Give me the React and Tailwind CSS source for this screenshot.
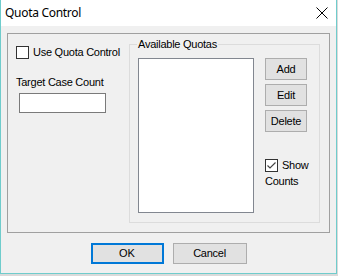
import React from "react";

const body = { fontFamily: '"Liberation Sans", Arial, sans-serif' };

function Box({ checked }) {
  return (
    <div className="w-[13px] h-[13px] border border-[#333333] bg-white flex items-center justify-center shrink-0">
      {checked && (
        <svg width="11" height="11" viewBox="0 0 11 11">
          <path d="M1.5 5.5 L4 8 L9.5 2.5" stroke="#444444" strokeWidth="1.2" fill="none" />
        </svg>
      )}
    </div>
  );
}

function Btn({ children }) {
  return (
    <div className="w-[42px] h-[22px] border border-[#adadad] bg-[#e1e1e1] flex items-center justify-center text-[11px] tracking-[-0.25px] text-black">
      {children}
    </div>
  );
}

export default function App() {
  return (
    <div className="w-[338px] h-[276px] bg-[#dadada]">
      <div className="w-[337px] h-[274px] border-l border-r border-b border-[#6fcccc] bg-[#f0f0f0] flex flex-col" style={body}>
        <div className="h-[26px] bg-white flex items-center justify-between pl-[4px] pr-[8px] shrink-0">
          <span className="text-[12px] tracking-[-0.3px] text-black" style={{ fontFamily: '"Noto Sans", "Open Sans", sans-serif' }}>Quota Control</span>
          <svg width="12" height="12" viewBox="0 0 12 12">
            <path d="M0.5 0.5 L11.5 11.5 M11.5 0.5 L0.5 11.5" stroke="#000" strokeWidth="1" />
          </svg>
        </div>
        <div className="pl-[6px] pt-[7px]">
          <div className="w-[323px] h-[200px] border border-[#a0a0a0] flex">
            <div className="w-[121px] pl-[8px] pt-[12px] flex flex-col">
              <div className="flex items-center gap-[4px] h-[13px]">
                <Box />
                <span className="text-[11px] tracking-[-0.25px] text-black leading-none">Use Quota Control</span>
              </div>
              <div className="mt-[16px] text-[11px] tracking-[-0.25px] text-black leading-[14px]">Target Case Count</div>
              <div className="mt-[4px] ml-[3px] w-[87px] h-[20px] border border-[#7a7a7a] bg-white" />
            </div>
            <div className="relative mt-[10px] w-[191px] h-[179px] border border-[#dcdcdc] flex pl-[8px] pt-[13px]">
              <span className="absolute left-[7px] top-[-8px] px-[1px] bg-[#f0f0f0] text-[11px] tracking-[-0.25px] leading-[14px] text-black">Available Quotas</span>
              <div className="w-[116px] h-[155px] border border-[#828790] bg-white" />
              <div className="ml-[11px] flex flex-col gap-[4px]">
                <Btn>Add</Btn>
                <Btn>Edit</Btn>
                <Btn>Delete</Btn>
                <div className="mt-[23px] flex flex-col text-[11px] tracking-[-0.25px] text-black">
                  <div className="flex items-center gap-[4px] h-[13px]">
                    <Box checked />
                    <span className="leading-none">Show</span>
                  </div>
                  <span className="leading-[14px] mt-[2px]">Counts</span>
                </div>
              </div>
            </div>
          </div>
          <div className="flex justify-center gap-[9px] mt-[10px] pr-[6px]">
            <div className="w-[73px] h-[21px] border-2 border-[#0078d7] bg-[#e1e1e1] flex items-center justify-center text-[11px] text-black">OK</div>
            <div className="w-[74px] h-[21px] border border-[#adadad] bg-[#e1e1e1] flex items-center justify-center text-[11px] tracking-[-0.25px] text-black">Cancel</div>
          </div>
        </div>
      </div>
    </div>
  );
}
